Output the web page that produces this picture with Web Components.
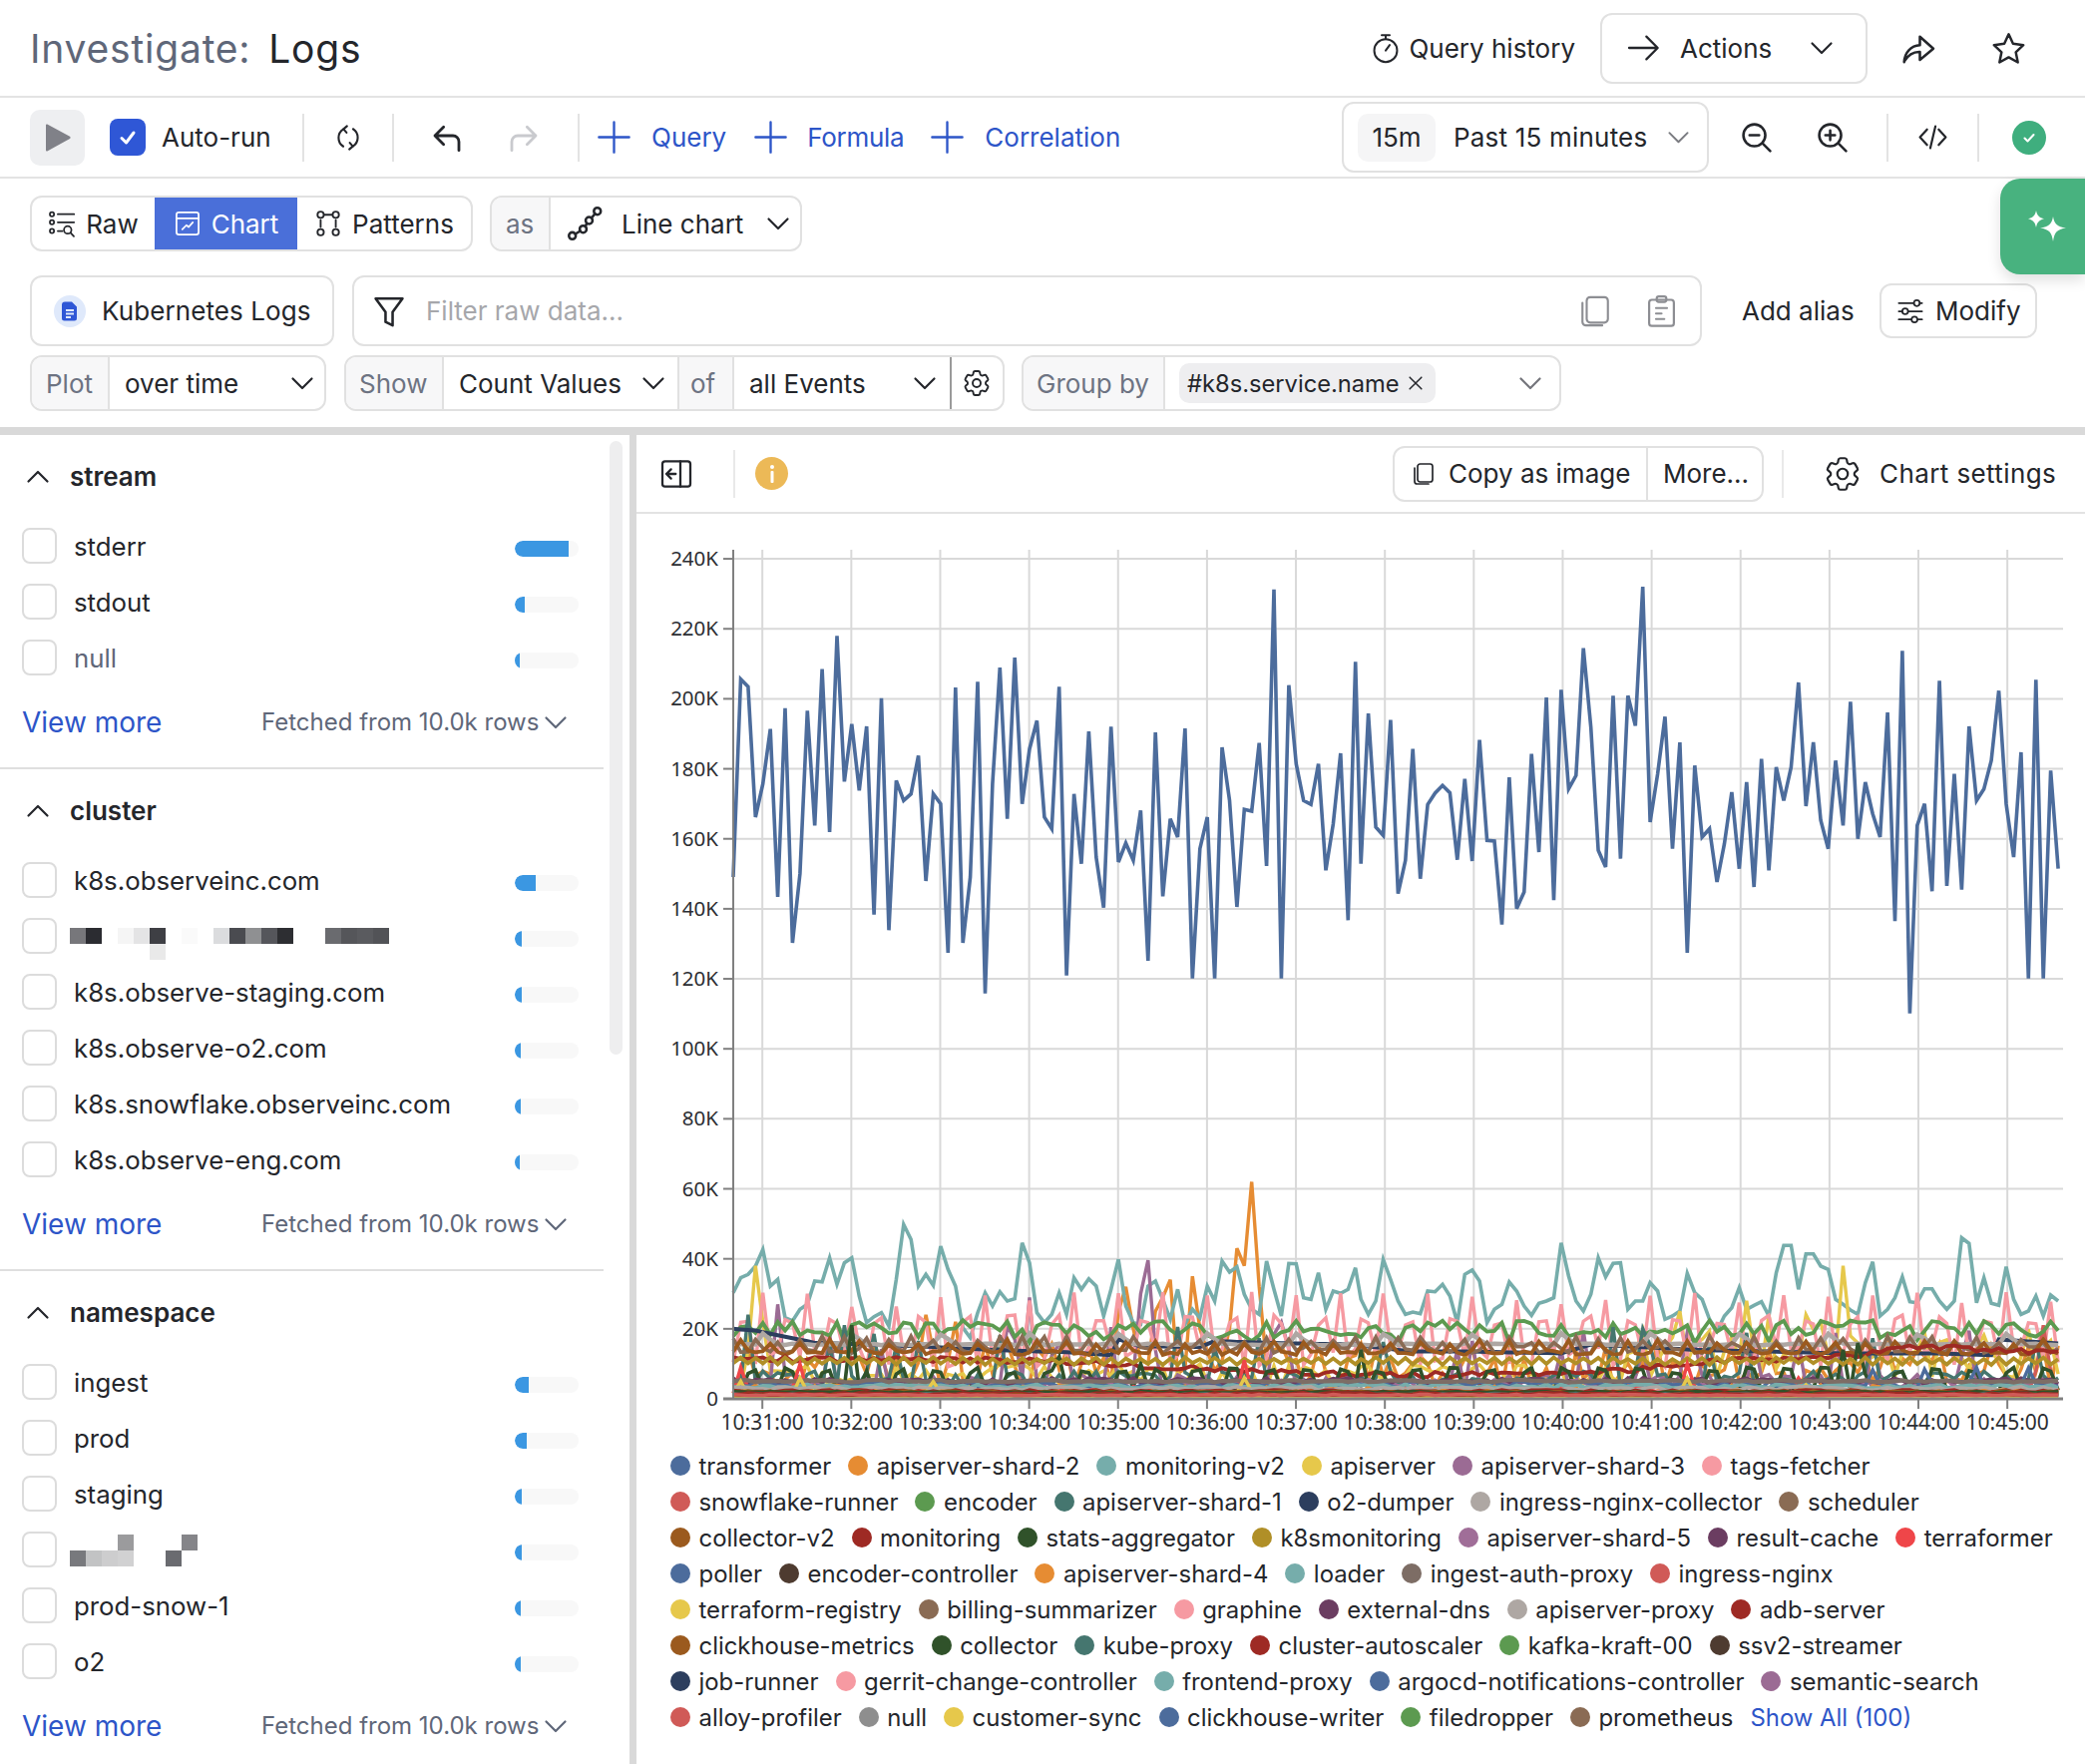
<!DOCTYPE html>
<html>
<head>
<meta charset="utf-8">
<title>Investigate: Logs</title>
<style>
  html, body { margin: 0; padding: 0; background: #fff; }
  body { width: 2090px; height: 1768px; overflow: hidden; position: relative; font-family: Inter, "Liberation Sans", sans-serif; font-size: 26px; color: #24262b; }
</style>
</head>
<body>
  <page-head></page-head>
  <run-bar></run-bar>
  <query-panel></query-panel>
  <ask-fab></ask-fab>
  <main-split>
    <facet-panel slot="left">
      <facet-section name="stream" more="0">
        <facet-row bar="54">stderr</facet-row>
        <facet-row bar="10">stdout</facet-row>
        <facet-row bar="5" muted>null</facet-row>
      </facet-section>
      <facet-section name="cluster">
        <facet-row bar="21">k8s.observeinc.com</facet-row>
        <facet-row bar="7"><pixel-blur shift="8" cells="0,0,#77777b;1,0,#2b2c31;3,0,#f5f5f5;4,0,#e4e4e5;5,0,#3e3f44;5,1,#e9e9e9;7,0,#fafafa;9,0,#dbdcde;10,0,#4a4b50;11,0,#8f9092;12,0,#55565b;13,0,#2d2e32;16,0,#6a6b6f;17,0,#55565a;18,0,#5a5b5f;19,0,#525357"></pixel-blur></facet-row>
        <facet-row bar="7">k8s.observe-staging.com</facet-row>
        <facet-row bar="6">k8s.observe-o2.com</facet-row>
        <facet-row bar="6">k8s.snowflake.observeinc.com</facet-row>
        <facet-row bar="5">k8s.observe-eng.com</facet-row>
      </facet-section>
      <facet-section name="namespace">
        <facet-row bar="14">ingest</facet-row>
        <facet-row bar="12">prod</facet-row>
        <facet-row bar="7">staging</facet-row>
        <facet-row bar="7"><pixel-blur shift="1" cells="3,0,#9b9b9d;7,0,#858589;0,1,#78797d;1,1,#c2c3c4;2,1,#cdcdce;3,1,#d1d1d2;6,1,#6a6b70"></pixel-blur></facet-row>
        <facet-row bar="6">prod-snow-1</facet-row>
        <facet-row bar="6">o2</facet-row>
      </facet-section>
    </facet-panel>
    <chart-panel slot="right">
      <ts-chart></ts-chart>
      <chart-legend></chart-legend>
    </chart-panel>
  </main-split>

<script>
const ICONS = {
  stopwatch: '<circle cx="12" cy="14" r="8.6"/><path d="M9 2.5h6M12 2.5v3M12 14l3-4.2"/>',
  arrow: '<path d="M1.5 12h21M14.5 3.5 23 12l-8.5 8.5"/>',
  chevron: '<path d="M2.5 7.5 12 17l9.5-9.5"/>',
  chevup: '<path d="M2.5 16.5 12 7l9.5 9.5"/>',
  share: '<path d="M2.5 21.5c.3-6.5 4.5-11 10.5-11.3V4.500l9 8-9 7.5v-5.3c-4.5-.2-7.5 1.5-10.5 6.300z"/>',
  star: '<path d="m12 2.3 3 6.500 7.100.9-5.200 4.900 1.400 7-6.300-3.500-6.300 3.500 1.400-7-5.200-4.900 7.100-.9z"/>',
  sync: '<path d="M8 4.600a8.800 8.800 0 0 0-.2 14.900M16 19.400a8.800 8.800 0 0 0 .2-14.900"/><path d="M11 2 8 4.600l2.600 3M13 22l3-2.600-2.600-3"/>',
  undo: '<path d="M9.5 4 3 10.500 9.500 17M3 10.500h13.500a4.500 4.500 0 0 1 4.500 4.500v6.500"/>',
  redo: '<path d="M14.5 4 21 10.500 14.500 17M21 10.500H7.500A4.500 4.500 0 0 0 3 15v6.500"/>',
  plus: '<path d="M12 1v22M1 12h22"/>',
  zoomout: '<circle cx="10.5" cy="10.5" r="8.5"/><path d="m16.8 16.8 6 6M6.800 10.500h7.400"/>',
  zoomin: '<circle cx="10.5" cy="10.5" r="8.5"/><path d="m16.8 16.8 6 6M6.800 10.500h7.400M10.500 6.800v7.400"/>',
  code: '<path d="M7.5 6 2 12l5.500 6M16.500 6l5.500 6-5.500 6M14 3.500l-4 17"/>',
  raw: '<circle cx="3.5" cy="4" r="1.8"/><circle cx="3.5" cy="11" r="1.8"/><circle cx="3.5" cy="18.5" r="1.8"/><path d="M8.5 4h14M8.5 11h14M8.5 18.5h4"/><circle cx="17" cy="17.5" r="3.2"/><path d="m19.5 20 2.8 3"/>',
  chartbox: '<rect x="2.5" y="2.5" width="19" height="19" rx="2"/><path d="M2.5 7.500h19M7.500 17l3.500-3.500 2 1.500 3.500-4"/>',
  patterns: '<circle cx="5.5" cy="4.5" r="2.7"/><circle cx="18.5" cy="4.5" r="2.7"/><circle cx="5.5" cy="19.5" r="2.7"/><circle cx="18.5" cy="19.5" r="2.7"/><path d="M8.5 4.500h7M5.500 9v6M18.500 9v6"/>',
  linechart: '<circle cx="3.8" cy="20.2" r="2.3"/><circle cx="11" cy="15.8" r="2.3"/><circle cx="15" cy="10" r="2.3"/><circle cx="20.5" cy="3.8" r="2.3"/><path d="m5.800 19 3.300-2M12.500 13.900l1-2M16.600 8.300l2.400-2.900"/>',
  funnel: '<path d="M2.5 3h19l-7 9.500V22l-5-2.500v-7z"/>',
  pages: '<rect x="6" y="2" width="15" height="18" rx="2.5"/><path d="M3 6v13.500A2.500 2.500 0 0 0 5.500 22H17"/>',
  clipboard: '<rect x="3" y="4" width="18" height="19" rx="2"/><rect x="8.5" y="1.5" width="7" height="4" rx="1.5"/><path d="M8 10h8M8 14h4M8 18h6"/>',
  sliders: '<path d="M2 5h13M20 5h2M2 12h3M10 12h12M2 19h11M18 19h4"/><circle cx="17.5" cy="5" r="2.5"/><circle cx="7.5" cy="12" r="2.5"/><circle cx="15.5" cy="19" r="2.5"/>',
  gear: '<path d="M9.594 3.940c.09-.542.56-.94 1.110-.94h2.593c.55 0 1.020.398 1.110.94l.213 1.281c.063.374.313.686.645.870.074.040.147.083.220.127.325.196.72.257 1.075.124l1.217-.456a1.125 1.125 0 0 1 1.370.49l1.296 2.247a1.125 1.125 0 0 1-.26 1.431l-1.003.827c-.293.241-.438.613-.43.992a7.723 7.723 0 0 1 0 .255c-.008.378.137.75.43.991l1.004.827c.424.35.534.955.26 1.430l-1.298 2.247a1.125 1.125 0 0 1-1.369.491l-1.217-.456c-.355-.133-.75-.072-1.076.124a6.470 6.470 0 0 1-.22.128c-.331.183-.581.495-.644.869l-.213 1.281c-.09.543-.56.94-1.110.94h-2.594c-.55 0-1.019-.398-1.110-.94l-.213-1.281c-.062-.374-.312-.686-.644-.87a6.520 6.520 0 0 1-.22-.127c-.325-.196-.72-.257-1.076-.124l-1.217.456a1.125 1.125 0 0 1-1.369-.49l-1.297-2.247a1.125 1.125 0 0 1 .26-1.431l1.004-.827c.292-.24.437-.613.43-.991a6.932 6.932 0 0 1 0-.255c.007-.38-.138-.751-.43-.992l-1.004-.827a1.125 1.125 0 0 1-.26-1.430l1.297-2.247a1.125 1.125 0 0 1 1.370-.491l1.216.456c.356.133.751.072 1.076-.124.072-.044.146-.086.22-.128.332-.183.582-.495.644-.869l.214-1.280Z"/><circle cx="12" cy="12" r="3"/>',
  collapse: '<rect x="1.5" y="2.5" width="21" height="19" rx="2"/><path d="M15 2.500v19M11.500 12H4.500M8 8.500 4.500 12 8 15.500"/>',
  close: '<path d="M5 5l14 14M19 5 5 19"/>'
};

class XIcon extends HTMLElement {
  connectedCallback() {
    const size = this.getAttribute('size') || 24;
    const sw = this.getAttribute('sw') || 1.8;
    this.attachShadow({ mode: 'open' });
    this.shadowRoot.innerHTML = `
      <style>:host { display: inline-flex; flex: none; width: ${size}px; height: ${size}px; } svg { width: 100%; height: 100%; overflow: visible; }</style>
      <svg viewBox="0 0 24 24" fill="none" stroke="currentColor" stroke-width="${sw}" stroke-linecap="round" stroke-linejoin="round">${ICONS[this.getAttribute('name')]}</svg>`;
  }
}

// shared look of the bordered field groups
const GROUP_CSS = `
  * { box-sizing: border-box; }
  .grp { display: flex; align-items: stretch; height: 56px; border: 2px solid #e1e1e1; border-radius: 12px; overflow: hidden; background: #fff; flex: none; }
  .lab { display: flex; align-items: center; background: #f7f7f8; color: #6d7382; padding-left: 14px; border-right: 2px solid #e1e1e1; }
  .val { display: flex; align-items: center; padding-left: 16px; position: relative; }
  .val x-icon { position: absolute; top: 14px; }
  .gray { color: #74757b; }
`;

class PageHead extends HTMLElement {
  connectedCallback() {
    this.attachShadow({ mode: 'open' });
    this.shadowRoot.innerHTML = `
      <style>
        ${GROUP_CSS}
        :host { display: flex; align-items: center; box-sizing: border-box; height: 98px; padding: 0 59px 0 30px; border-bottom: 2px solid #e3e3e3; }
        h1 { margin: 0; font: 400 39px Inter, sans-serif; letter-spacing: .8px; color: #5f6779; }
        h1 b { font-weight: 400; color: #24262b; margin-left: 6px; }
        .hist { margin-left: auto; display: flex; align-items: center; gap: 7px; }
        .act { margin-left: 25px; width: 268px; height: 71px; border: 2px solid #e1e1e1; border-radius: 12px; display: flex; align-items: center; padding-left: 25px; }
        .act span { margin-left: 21px; flex: 1; }
        .act x-icon:last-child { margin-right: 32px; }
        .sh { margin-left: 33px; }
        .st { margin-left: 55px; }
      </style>
      <h1>Investigate: <b>Logs</b></h1>
      <div class="hist"><x-icon name="stopwatch" size="32" sw="1.5"></x-icon>Query history</div>
      <div class="act"><x-icon name="arrow" size="32" sw="1.7"></x-icon><span>Actions</span><x-icon name="chevron" size="24" sw="2.2"></x-icon></div>
      <x-icon class="sh" name="share" size="36" sw="1.7"></x-icon>
      <x-icon class="st" name="star" size="35" sw="1.7"></x-icon>`;
  }
}

class RunBar extends HTMLElement {
  connectedCallback() {
    this.attachShadow({ mode: 'open' });
    this.shadowRoot.innerHTML = `
      <style>
        ${GROUP_CSS}
        :host { display: flex; align-items: center; box-sizing: border-box; height: 81px; padding-left: 30px; border-bottom: 2px solid #e3e3e3; }
        .play { width: 55px; height: 56px; background: #eeeff1; border-radius: 10px; display: grid; place-items: center; }
        .play svg { width: 26px; height: 28px; }
        .cb { width: 36px; height: 37px; margin-left: 25px; background: #2f57d6; border-radius: 8px; display: grid; place-items: center; }
        .cb svg { width: 22px; height: 22px; }
        .lbl { margin-left: 16px; width: 113px; }
        .sep { width: 2px; height: 48px; background: #e3e3e3; flex: none; }
        .add { color: #2d55c8; display: flex; align-items: center; }
        .add span { margin-left: 21px; }
        .time { margin-left: auto; width: 368px; height: 71px; border: 2px solid #e1e1e1; border-radius: 12px; display: flex; align-items: center; padding-left: 14px; }
        .chip { width: 78px; height: 48px; background: #f5f5f6; border-radius: 10px; display: grid; place-items: center; margin-right: 18px; }
        .time span { letter-spacing: .2px; }
        .time x-icon { margin-left: auto; margin-right: 17px; color: #7a7b80; }
        .ok { width: 34px; height: 34px; border-radius: 50%; background: #3fae7e; display: grid; place-items: center; }
        .ok svg { width: 18px; height: 18px; }
      </style>
      <div class="play"><svg viewBox="0 0 26 28"><path d="M1 1.5c0-1 1-1.300 1.800-.8L25 12.800c.8.500.8 1.800 0 2.300L2.800 27.300c-.8.500-1.800.2-1.800-.8z" fill="#808188"/></svg></div>
      <div class="cb"><svg viewBox="0 0 22 22" fill="none" stroke="#fff" stroke-width="3" stroke-linecap="round" stroke-linejoin="round"><path d="m5 11.5 4.500 4.500L17 6"/></svg></div>
      <div class="lbl">Auto-run</div>
      <div class="sep" style="margin-left:28px"></div>
      <x-icon name="sync" size="28" style="margin-left:30px" sw="1.8"></x-icon>
      <div class="sep" style="margin-left:30px"></div>
      <x-icon name="undo" size="32" style="margin-left:37px" sw="2.1"></x-icon>
      <x-icon class="gray" name="redo" size="32" style="margin-left:45px;color:#c9cace" sw="2.1"></x-icon>
      <div class="sep" style="margin-left:38px"></div>
      <div class="add" style="margin-left:18px"><x-icon name="plus" size="33" sw="1.7"></x-icon><span>Query</span></div>
      <div class="add" style="margin-left:28px"><x-icon name="plus" size="33" sw="1.7"></x-icon><span style="margin-left:20px;letter-spacing:-.3px">Formula</span></div>
      <div class="add" style="margin-left:27px"><x-icon name="plus" size="33" sw="1.7"></x-icon><span>Correlation</span></div>
      <div class="time"><div class="chip">15m</div><span>Past 15 minutes</span><x-icon name="chevron" size="23" sw="2"></x-icon></div>
      <x-icon name="zoomout" size="31" style="margin-left:32px" sw="2"></x-icon>
      <x-icon name="zoomin" size="31" style="margin-left:45px" sw="2"></x-icon>
      <div class="sep" style="margin-left:39px"></div>
      <x-icon name="code" size="31" style="margin-left:29px" sw="1.7"></x-icon>
      <div class="sep" style="margin-left:29px"></div>
      <div class="ok" style="margin-left:33px;margin-right:39px"><svg viewBox="0 0 18 18" fill="none" stroke="#fff" stroke-width="2" stroke-linecap="round" stroke-linejoin="round"><path d="m4.500 9.500 3 3L13.500 6"/></svg></div>`;
  }
}

class QueryPanel extends HTMLElement {
  connectedCallback() {
    this.attachShadow({ mode: 'open' });
    this.shadowRoot.innerHTML = `
      <style>
        ${GROUP_CSS}
        :host { display: block; padding: 17px 0 0 30px; border-bottom: 8px solid #d9d9d9; height: 257px; box-sizing: border-box; }
        .row { display: flex; align-items: stretch; }
        .seg { display: flex; align-items: center; justify-content: center; gap: 10px; }
        .on { background: #4a6fd9; color: #fff; }
        .r2 { margin-top: 24px; height: 71px; align-items: center; }
        .big { height: 71px; }
        .src { width: 305px; align-items: center; padding-left: 22px; letter-spacing: .1px; }
        .dot { width: 32px; height: 32px; border-radius: 50%; background: #dfe9fb; display: grid; place-items: center; margin-right: 16px; }
        .dot svg { width: 16px; height: 20px; }
        .flt { margin-left: 18px; width: 1353px; align-items: center; padding-left: 18px; letter-spacing: 0; }
        .flt span { margin-left: 20px; color: #a6a7ab; flex: 1; }
        .flt x-icon.g { color: #8d8e93; }
        .mod { margin-left: 23px; width: 158px; height: 55px; border: 2px solid #e1e1e1; border-radius: 12px; display: flex; align-items: center; padding-left: 15px; gap: 11px; }
        .r3 { margin-top: 9px; }
        .chip { display: flex; align-items: center; height: 40px; margin: 6px 0 0 14px; padding: 0 10px 0 8px; background: #eeeef0; border-radius: 10px; font-size: 23.7px; }
      </style>
      <div class="row">
        <div class="grp" style="width:444px">
          <div class="seg" style="width:123px"><x-icon name="raw" size="28" sw="1.5"></x-icon>Raw</div>
          <div class="seg on" style="width:143px;margin-top:-2px;margin-bottom:-2px"><x-icon name="chartbox" size="28" sw="1.5"></x-icon>Chart</div>
          <div class="seg" style="width:174px"><x-icon name="patterns" size="28" sw="1.6"></x-icon>Patterns</div>
        </div>
        <div class="grp" style="width:313px;margin-left:17px">
          <div class="lab" style="width:59px">as</div>
          <div class="val" style="flex:1"><x-icon name="linechart" size="36" sw="1.7" style="left:16px;top:8px"></x-icon><span style="margin-left:55px">Line chart</span><x-icon name="chevron" size="24" sw="2.2" style="left:216px"></x-icon></div>
        </div>
      </div>
      <div class="row r2">
        <div class="grp big src"><div class="dot"><svg viewBox="0 0 16 20"><path d="M3 .5h7l5 5V17a2.500 2.500 0 0 1-2.500 2.500h-10A2.500 2.500 0 0 1 0 17V3.500A3 3 0 0 1 3 .5z" fill="#2f57d6"/><path d="M4 9h8M4 12.500h8M4 16h5" stroke="#dfe9fb" stroke-width="1.8"/></svg></div>Kubernetes Logs</div>
        <div class="grp big flt"><x-icon name="funnel" size="34" sw="1.8"></x-icon><span>Filter raw data...</span><x-icon class="g" name="pages" size="34" sw="1.5"></x-icon><x-icon class="g" name="clipboard" size="33" sw="1.6" style="margin:0 22px 0 33px"></x-icon></div>
        <div style="margin-left:40px;width:113px;white-space:nowrap">Add alias</div>
        <div class="mod" style="margin-left:25px"><x-icon name="sliders" size="28" sw="1.5"></x-icon>Modify</div>
      </div>
      <div class="row r3">
        <div class="grp" style="width:297px">
          <div class="lab" style="width:78px">Plot</div>
          <div class="val" style="flex:1;padding-left:15px">over time<x-icon name="chevron" size="24" sw="2.2" style="left:181px"></x-icon></div>
        </div>
        <div class="grp" style="width:662px;margin-left:18px">
          <div class="lab" style="width:98px;padding-left:13px">Show</div>
          <div class="val" style="width:236px;padding-left:15px;border-right:2px solid #e1e1e1">Count Values<x-icon name="chevron" size="24" sw="2.2" style="left:198px"></x-icon></div>
          <div class="lab" style="width:55px;padding-left:11px">of</div>
          <div class="val" style="width:218px;padding-left:15px;border-right:2px solid #9a9a9a">all Events<x-icon name="chevron" size="24" sw="2.2" style="left:179px"></x-icon></div>
          <div class="val" style="flex:1;padding-left:13px"><x-icon name="gear" size="32" sw="1.4" style="left:9px;top:10px"></x-icon></div>
        </div>
        <div class="grp" style="width:541px;margin-left:17px">
          <div class="lab" style="width:142px;padding-left:13px">Group by</div>
          <div class="chip">#k8s.service.name<x-icon name="close" size="20" sw="1.8" style="margin-left:6px"></x-icon></div>
          <x-icon class="gray" name="chevron" size="24" sw="2.2" style="margin:14px 0 0 83px"></x-icon>
        </div>
      </div>`;
  }
}

class AskFab extends HTMLElement {
  connectedCallback() {
    this.attachShadow({ mode: 'open' });
    this.shadowRoot.innerHTML = `
      <style>
        :host { position: absolute; top: 179px; right: 0; width: 85px; height: 96px; background: #48b27f; border-radius: 20px 0 0 20px; box-shadow: 0 6px 14px rgba(0,0,0,.12); display: grid; place-items: center; }
        svg { width: 40px; height: 34px; margin-left: 8px; }
      </style>
      <svg viewBox="0 0 40 34" fill="#fff"><path d="M9 1c1 5 3 7 8 8.300-5 1.300-7 3.500-8 8.700-1-5.200-3-7.400-8-8.700C6 8 8 6 9 1z"/><path d="M26 7c1.200 7.500 4 10.200 13 11.500-9 1.300-11.800 4.500-13 13.500-1.200-9-4-12.200-13-13.500C22 17.200 24.800 14.500 26 7z"/></svg>`;
  }
}

class MainSplit extends HTMLElement {
  connectedCallback() {
    this.attachShadow({ mode: 'open' });
    this.shadowRoot.innerHTML = `
      <style>
        :host { display: grid; grid-template-columns: 631px 7px 1fr; height: 1332px; }
        .bar { background: #d9d9d9; }
        ::slotted(*) { min-width: 0; }
      </style>
      <slot name="left"></slot><div class="bar"></div><slot name="right"></slot>`;
  }
}

class FacetPanel extends HTMLElement {
  connectedCallback() {
    this.attachShadow({ mode: 'open' });
    this.shadowRoot.innerHTML = `
      <style>
        :host { display: flex; overflow: hidden; height: 1332px; }
        .list { width: 605px; flex: none; }
        .track { flex: 1; }
        .thumb { margin: 6px 0 0 6px; width: 13px; height: 615px; background: #eeeeef; border-radius: 7px; }
      </style>
      <div class="list"><slot></slot></div>
      <div class="track"><div class="thumb"></div></div>`;
  }
}

class FacetSection extends HTMLElement {
  connectedCallback() {
    this.attachShadow({ mode: 'open' });
    this.shadowRoot.innerHTML = `
      <style>
        :host { display: block; padding-bottom: 9px; border-bottom: 2px solid #dfdfdf; }
        :host(:last-child) { border-bottom: 0; }
        header { height: 83px; display: flex; align-items: center; padding-left: 26px; font-weight: 600; font-size: 26px; }
        header span { margin-left: 20px; }
        footer { height: 73px; display: flex; align-items: center; padding-left: 22px; color: #5f6779; font-size: 24px; }
        a { color: #2d55c8; font-size: 28px; width: 240px; }
        x-icon { color: #24262b; }
        footer x-icon { color: #5f6779; margin-left: 5px; }
      </style>
      <header><x-icon name="chevup" size="24" sw="2.2"></x-icon><span>${this.getAttribute('name')}</span></header>
      <slot></slot>
      <footer><a>View more</a>Fetched from 10.0k rows<x-icon name="chevron" size="24" sw="2.2"></x-icon></footer>`;
  }
}

class FacetRow extends HTMLElement {
  connectedCallback() {
    const bar = this.getAttribute('bar') || 0;
    this.attachShadow({ mode: 'open' });
    this.shadowRoot.innerHTML = `
      <style>
        :host { display: flex; align-items: center; height: 56px; padding: 0 25px 0 22px; font-size: 25.8px; }
        :host([muted]) .t { color: #5f6779; }
        .box { width: 35px; height: 36px; border: 2px solid #dcdcdc; border-radius: 8px; flex: none; box-sizing: border-box; }
        .t { margin-left: 17px; }
        .meter { margin-left: auto; width: 64px; height: 16px; margin-top: 6px; background: #f8f8f8; border-radius: 8px; overflow: hidden; }
        .meter i { display: block; height: 100%; width: ${bar}px; background: #3b97e2; border-radius: 8px 0 0 8px; }
      </style>
      <div class="box"></div><div class="t"><slot></slot></div><div class="meter"><i></i></div>`;
  }
}

class PixelBlur extends HTMLElement {
  connectedCallback() {
    const cells = this.getAttribute('cells').split(';').map(c => c.split(','));
    this.attachShadow({ mode: 'open' });
    this.shadowRoot.innerHTML = `
      <style>
        :host { display: grid; grid-template-columns: repeat(20, 16px); grid-auto-rows: 16px; margin-left: -4px; height: 32px; transform: translateY(${this.getAttribute('shift')}px); }
      </style>` + cells.map(([x, y, col]) => `<div style="grid-column:${+x + 1};grid-row:${+y + 1};background:${col}"></div>`).join('');
  }
}

class ChartPanel extends HTMLElement {
  connectedCallback() {
    this.attachShadow({ mode: 'open' });
    this.shadowRoot.innerHTML = `
      <style>
        ${GROUP_CSS}
        :host { display: block; }
        header { display: flex; align-items: center; height: 79px; border-bottom: 2px solid #e3e3e3; padding-left: 24px; }
        .sep { width: 2px; height: 48px; background: #e9e9e9; flex: none; }
        .info { width: 33px; height: 33px; border-radius: 50%; background: #ecb957; margin-left: 20px; display: grid; place-items: center; }
        .info svg { width: 6px; height: 20px; }
        .cell { display: flex; align-items: center; }
      </style>
      <header>
        <x-icon name="collapse" size="32" sw="1.7"></x-icon>
        <div class="sep" style="margin-left:41px"></div>
        <div class="info"><svg viewBox="0 0 6 20" fill="#fff"><circle cx="3" cy="3" r="2"/><rect x="1.5" y="7" width="3" height="12" rx="1"/></svg></div>
        <div class="grp" style="margin-left:606px;width:372px">
          <div class="cell" style="width:254px;padding-left:17px;gap:13px;border-right:2px solid #e1e1e1"><x-icon name="pages" size="24" sw="1.7"></x-icon>Copy as image</div>
          <div class="cell" style="padding-left:15px">More...</div>
        </div>
        <div class="sep" style="margin-left:18px"></div>
        <x-icon name="gear" size="42" sw="1.25" style="margin-left:38px"></x-icon>
        <div style="margin-left:16px;letter-spacing:.4px">Chart settings</div>
      </header>
      <slot></slot>`;
  }
}

// y pixels read off the chart, 5s apart
const BLUE_L = [1350,755,778,1170,1070,905,1410,842,1548,1340,850,1195,725,1215,625,1063,890,1090,897,1463,812,1510,1060,1120,1100,985,1362,1100,1130,1578,780,1548,1350,763,1700,1070,720,1175,690,1130,965,880,1170,1205,778,1646,1100,1310,912,1290,1442,898,1305,1248,1300,1150,1602,915,1408,1175,1230,903,1655,1265,1170,1655,960,1120,1440,1147,1152,947,1317,485,1655,773,1010,1120,1132,1010,1330,1190,978,1480,703];
const BLUE_R = [1310,858,1200,1225,878,1400,1300,965,1355,1132,1098,1075,1097,1298,1055,1302,938,1240,1242,1493,1050,1445,1395,980,1275,810,1420,787,1085,1045,662,900,1270,1320,805,1295,805,895,477,1185,1040,868,1265,945,1578,1015,1230,1205,1365,1250,1095,1325,1065,1380,995,1330,1020,1120,1020,765,1137,945,1180,1265,1000,1195,823,1235,1065,1160,1230,855,1483,670,1760,1195,1130,1393,760,1377,1040,1388,897,1120,1085,1000,790,1130,1290,975,1655,757,1655,1030,1325];
const TEAL_L = [440,395,385,360,310,420,400,515,525,490,475,405,407,335,415,350,335,450,530,512,500,540,400,235,280,420,385,418,300,370,420,545,575,500,440,480,437,465,458,290,350,500,530,505,440,505,395,430,398,420,510,430,340,480,530,535,420,405,460,520,430,535,490,515,420,465,345,378,362,445,490,505,345,430,510,352,353,455,460,380,490,435,442,430,365];
const TEAL_R = [460,505,465,340,400,465,505,498,503,435,437,415,450,530,385,372,405,530,490,475,408,435,480,508,472,465,455,290,390,465,495,445,335,392,352,350,490,465,465,410,435,520,510,495,382,440,460,520,555,510,485,425,490,478,467,510,380,298,298,430,323,323,360,370,460,475,492,505,410,347,510,490,455,392,467,470,428,428,465,490,465,275,292,470,395,472,478,362,460,505,495,450,510,447,465];

const X0 = 640, LX = i => X0 + (207 + 16.17 * i) / 2.178, RX = i => 1360 + (9 + 15.97 * i) / 2.148;
const XS = [...BLUE_L.map((_, i) => LX(i)), ...BLUE_R.map((_, i) => RX(i))];
const Y0 = 1403, YSTEP = 70.16, KY = k => Y0 - k * YSTEP / 20;
const rng = seed => () => (seed = (seed * 16807) % 2147483647) / 2147483647;
const N = XS.length;

function gen(seed, fn, over) {
  const r = rng(seed * 7919 + 13);
  const out = [];
  for (let i = 0; i < N; i++) out.push(fn(i, r));
  if (over) for (const k in over) out[k] = over[k];
  return out;
}
const lerpPts = (pts, i) => {
  for (let j = 1; j < pts.length; j++) {
    if (i <= pts[j][0]) {
      const [a, av] = pts[j - 1], [b, bv] = pts[j];
      return av + (bv - av) * (i - a) / (b - a);
    }
  }
  return pts[pts.length - 1][1];
};

const c = { blue: '#4c6c9c', orange: '#e68c33', teal: '#76adab', yellow: '#e6c84b', purple: '#9b6b94', pink: '#f69aa2', red: '#d05a57', green: '#5c9a50', dteal: '#45766f', navy: '#2c3e5e', warm: '#aea7a3', brown: '#8a6b54', rust: '#9b5a1e', dred: '#9e2a24', dgreen: '#30522a', olive: '#b08f27', mauve: '#a06e98', plum: '#6b3d61', bright: '#ef4649', dbrown: '#4e3b30', taupe: '#7d6d65', gray: '#8e8e8e' };

const SERIES = [
  { c: c.orange, d: gen(1, (i, r) => r() < .45 ? 2 + r() * 6 : 7 + r() * 9, { 26: 24, 30: 22, 52: 25, 53: 32, 54: 20, 57: 25, 58: 29, 59: 34, 62: 35, 63: 20, 67: 20, 68: 43, 69: 38, 70: 62, 71: 32, 72: 10 }) },
  { c: c.yellow, d: gen(2, (i, r) => i > 120 ? 6 + r() * 14 : 3 + r() * 7, { 2: 14, 3: 38, 4: 22, 128: 25, 137: 28, 140: 24, 150: 38, 151: 18, 145: 24, 147: 22 }) },
  { c: c.purple, d: gen(3, (i, r) => r() < .12 ? 12 + r() * 10 : 2 + r() * 5, { 6: 27, 40: 29, 56: 39.6, 55: 30, 57: 14 }) },
  { c: c.pink, d: gen(4, (i, r) => { const m = i % 6; return m === 4 ? 26 + r() * 5 : m === 1 || m === 2 ? 21 + r() * 3 : 9 + r() * 6; }) },
  { c: c.red, d: gen(5, (i, r) => 1 + r() * 2, { 177: 21, 176: 8, 178: 8 }) },
  { c: c.green, w: 3.8, d: gen(6, (i, r) => 17.5 + r() * 5 - (i % 5 === 0 ? 1.5 : 0)) },
  { c: c.dteal, d: gen(7, (i, r) => r() < .1 ? 14 + r() * 8 : 3 + r() * 5, { 2: 24, 15: 21 }) },
  { c: c.navy, w: 4, d: gen(8, (i) => lerpPts([[0, 20], [3, 19.5], [11, 16], [25, 15], [35, 14], [45, 13.3], [51, 12.5], [52, 17], [55, 15], [63, 14.8], [65, 16.5], [72, 16], [84, 15.5], [92, 13.5], [100, 13.5], [112, 13], [116, 15.5], [130, 14], [150, 13], [162, 13], [170, 12.5], [171, 17], [179, 15.8]], i)) },
  { c: c.warm, w: 4.4, d: gen(9, (i, r) => 15.3 + r() * .5 + (i % 12 === 4 ? 3 : i % 12 === 5 ? 1.5 : 0)) },
  { c: c.brown, w: 3.6, d: gen(10, (i, r) => 13 + (i % 3 === 0 ? 3 : 0) + r() * 2) },
  { c: c.rust, w: 3.8, d: gen(11, (i, r) => 12.5 + (i % 4 === 1 ? 3 : 0) + r() * 1.5) },
  { c: c.dred, w: 3.8, d: gen(12, (i, r) => lerpPts([[0, 11.5], [40, 11], [60, 9], [85, 7], [100, 7], [120, 8], [135, 11], [150, 12], [160, 15], [179, 13]], i) + r() * 1.6 - .8) },
  { c: c.dgreen, w: 3.6, d: gen(13, (i, r) => i % 5 === 2 || i % 5 === 3 ? 7 + r() * 2 : 1.5 + r() * 2, { 16: 21, 17: 3, 55: 10, 44: 12, 85: 14, 152: 16, 150: 14 }) },
  { c: c.olive, w: 3.8, d: gen(14, (i, r) => 10 + (i % 2 ? 1.3 : -.3) + r() * .6) },
  { c: c.mauve, d: gen(15, (i, r) => 3.5 + r() * 2) },
  { c: c.plum, d: gen(16, (i, r) => 4 + r() * 2) },
  { c: c.bright, d: gen(17, (i, r) => 1.5 + r() * 2, { 1: 9, 9: 10, 69: 11, 129: 10, 144: 6 }) },
  { c: c.blue, d: gen(18, (i, r) => 3 + r() * 2 + (i > 150 && i % 7 === 0 ? 4 : 0)) },
  { c: c.dbrown, d: gen(19, (i, r) => 1 + r() * 1.5) },
  { c: c.orange, d: gen(20, (i, r) => 1 + r() * 3) },
  { c: c.teal, w: 4, d: gen(21, (i, r) => 3 + r() * 1.2) },
  { c: c.taupe, w: 4.2, d: gen(22, (i, r) => 4.7 + r() * .7) },
  { c: c.red, d: gen(23, (i, r) => 1 + r() * 1.5) },
  { c: c.yellow, d: gen(24, (i, r) => .8 + r() * 1.5, { 1: 5, 9: 6, 27: 5, 69: 6, 129: 6, 145: 4 }) },
  { c: c.brown, d: gen(25, (i, r) => 1 + r()) },
  { c: c.pink, d: gen(26, (i, r) => 1 + r() * 1.5) },
  { c: c.plum, d: gen(27, (i, r) => 1 + r()) },
  { c: c.warm, w: 3.4, d: gen(28, (i, r) => 2.5 + r()) },
  { c: c.dred, d: gen(29, (i, r) => 1.8 + r() * .8) },
  { c: c.rust, d: gen(30, (i, r) => 1.6 + r() * .7) },
  { c: c.dgreen, d: gen(31, (i, r) => 1.7 + r() * .4) },
  { c: c.dteal, d: gen(32, (i, r) => 1 + r() * .6) },
  { c: c.dred, d: gen(33, (i, r) => 1.2 + r() * .6) },
  { c: c.green, d: gen(34, (i, r) => .7 + r() * .6) },
  { c: c.dbrown, d: gen(35, (i, r) => .8 + r() * .5) },
  { c: c.navy, d: gen(36, (i, r) => .6 + r() * .5) },
  { c: c.pink, d: gen(37, (i, r) => .5 + r() * .5) },
  { c: c.teal, d: gen(38, (i, r) => .8 + r() * .4) },
  { c: c.blue, d: gen(39, (i, r) => .6 + r() * .4) },
  { c: c.purple, d: gen(40, (i, r) => .5 + r() * .4) },
  { c: c.red, d: gen(41, (i, r) => .8 + r() * .3) },
  { c: c.gray, d: gen(42, (i, r) => .3 + r() * .3) },
  { c: c.yellow, d: gen(43, (i, r) => .5 + r() * .4) },
  { c: c.rust, d: gen(44, (i, r) => 1 + r() * .3) },
  { c: c.dred, d: gen(45, (i, r) => 1 + r() * .4) },
  { c: c.red, d: gen(46, (i, r) => .9 + r() * .4) }
];

const pts = (d, xOf) => d.map((y, i) => `${xOf(i).toFixed(1)},${y.toFixed(1)}`).join(' ');

class TsChart extends HTMLElement {
  connectedCallback() {
    const F = i => XS[i];
    const grid = [], ticks = [], labels = [];
    for (let k = 0; k <= 12; k++) {
      const y = Y0 - k * YSTEP;
      if (k) grid.push(`<path d="M735 ${y}H2068" stroke="#d9d9d9" stroke-width="2"/>`);
      ticks.push(`<path d="M725 ${y}H735" stroke="#808080" stroke-width="2"/>`);
      labels.push(`<text x="720" y="${y + 7}" text-anchor="end">${k ? k * 20 + 'K' : '0'}</text>`);
    }
    for (let m = 0; m < 15; m++) {
      const x = 764.2 + m * 89.14;
      grid.push(`<path d="M${x} 552V1402" stroke="#d9d9d9" stroke-width="2"/>`);
      ticks.push(`<path d="M${x} ${Y0}V1413" stroke="#808080" stroke-width="2"/>`);
      labels.push(`<text class="tx" x="${x}" y="1434" text-anchor="middle">10:${31 + m}:00</text>`);
    }
    const blue = [...BLUE_L, ...BLUE_R].map(z => 430 + z / 3);
    const tealX = i => (i < TEAL_L.length ? LX(i) : RX(i - TEAL_L.length));
    const teal = [...TEAL_L, ...TEAL_R].map(z => 1150 + z / 3);
    const lines = [`<polyline points="${pts(blue, F)}" stroke="${c.blue}" stroke-width="3.6"/>`];
    // legend order: later series paint over earlier ones
    SERIES.forEach((s, idx) => {
      if (idx === 1) lines.push(`<polyline points="${pts(teal, tealX)}" stroke="${c.teal}" stroke-width="3.6"/>`);
      lines.push(`<polyline points="${pts(s.d.map(KY), F)}" stroke="${s.c}" stroke-width="${s.w || 3.4}"/>`);
    });
    this.attachShadow({ mode: 'open' });
    this.shadowRoot.innerHTML = `
      <style>
        :host { display: block; height: 936px; }
        svg { display: block; }
        text { font: 400 20.5px "Noto Sans", sans-serif; fill: #2c2e33; }
        text.tx { font-size: 21px; }
      </style>
      <svg width="1452" height="936" viewBox="638 516 1452 936">
        ${grid.join('')}
        <g fill="none" stroke-linejoin="miter">${lines.join('')}</g>
        <path d="M735 552V1403" stroke="#808080" stroke-width="2"/>
        <path d="M725 ${Y0}H2068" stroke="#808080" stroke-width="3"/>
        ${ticks.join('')}
        ${labels.join('')}
      </svg>`;
  }
}

const LEGEND = [
  [['transformer', c.blue], ['apiserver-shard-2', c.orange], ['monitoring-v2', c.teal], ['apiserver', c.yellow], ['apiserver-shard-3', c.purple], ['tags-fetcher', c.pink]],
  [['snowflake-runner', c.red], ['encoder', c.green], ['apiserver-shard-1', c.dteal], ['o2-dumper', c.navy], ['ingress-nginx-collector', c.warm], ['scheduler', c.brown]],
  [['collector-v2', c.rust], ['monitoring', c.dred], ['stats-aggregator', c.dgreen], ['k8smonitoring', c.olive], ['apiserver-shard-5', c.mauve], ['result-cache', c.plum], ['terraformer', c.bright]],
  [['poller', c.blue], ['encoder-controller', c.dbrown], ['apiserver-shard-4', c.orange], ['loader', c.teal], ['ingest-auth-proxy', c.taupe], ['ingress-nginx', c.red]],
  [['terraform-registry', c.yellow], ['billing-summarizer', c.brown], ['graphine', c.pink], ['external-dns', c.plum], ['apiserver-proxy', c.warm], ['adb-server', c.dred]],
  [['clickhouse-metrics', c.rust], ['collector', c.dgreen], ['kube-proxy', c.dteal], ['cluster-autoscaler', c.dred], ['kafka-kraft-00', c.green], ['ssv2-streamer', c.dbrown]],
  [['job-runner', c.navy], ['gerrit-change-controller', c.pink], ['frontend-proxy', c.teal], ['argocd-notifications-controller', c.blue], ['semantic-search', c.purple]],
  [['alloy-profiler', c.red], ['null', c.gray], ['customer-sync', c.yellow], ['clickhouse-writer', c.blue], ['filedropper', c.green], ['prometheus', c.brown]]
];

class ChartLegend extends HTMLElement {
  connectedCallback() {
    this.attachShadow({ mode: 'open' });
    const row = (items, extra = '') => `<div class="row">${items.map(([t, col]) => `<div class="it"><i style="background:${col}"></i>${t}</div>`).join('')}${extra}</div>`;
    this.shadowRoot.innerHTML = `
      <style>
        :host { display: block; padding-left: 34px; font-size: 23.9px; }
        .row { display: flex; align-items: center; height: 36px; gap: 17px; white-space: nowrap; }
        .it { display: flex; align-items: center; gap: 8.5px; }
        i { width: 20px; height: 20px; border-radius: 50%; flex: none; }
        a { color: #2d55c8; }
      </style>
      ${LEGEND.map((r, i) => row(r, i === 7 ? '<a>Show All (100)</a>' : '')).join('')}`;
  }
}

customElements.define('x-icon', XIcon);
customElements.define('page-head', PageHead);
customElements.define('run-bar', RunBar);
customElements.define('query-panel', QueryPanel);
customElements.define('ask-fab', AskFab);
customElements.define('main-split', MainSplit);
customElements.define('facet-panel', FacetPanel);
customElements.define('facet-section', FacetSection);
customElements.define('facet-row', FacetRow);
customElements.define('pixel-blur', PixelBlur);
customElements.define('chart-panel', ChartPanel);
customElements.define('ts-chart', TsChart);
customElements.define('chart-legend', ChartLegend);
</script>
</body>
</html>
